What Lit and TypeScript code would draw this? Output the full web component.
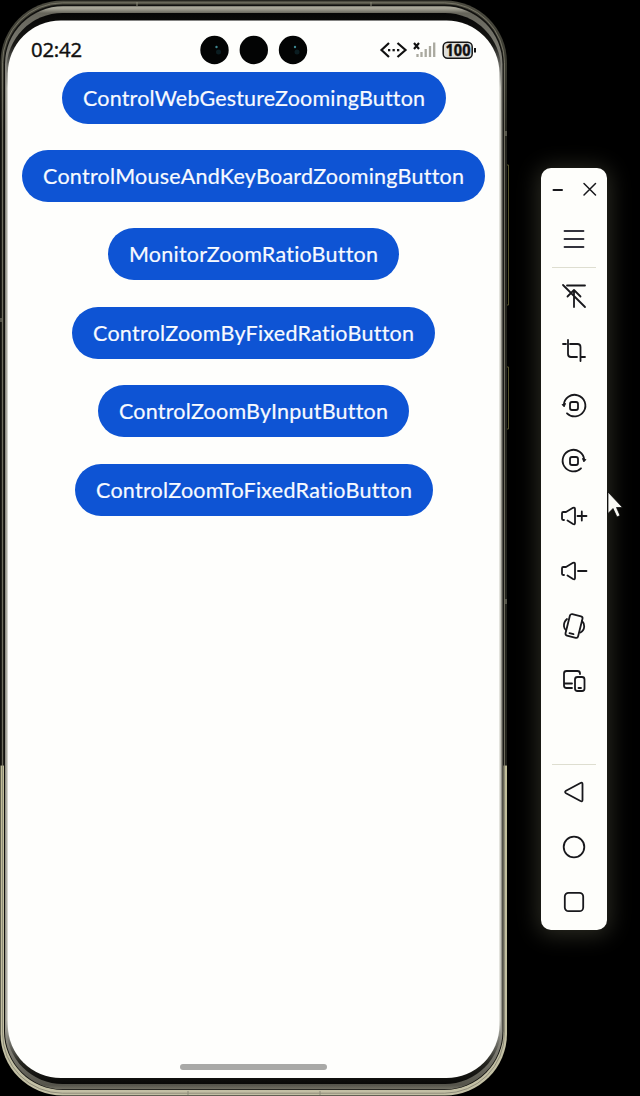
import { LitElement, html, css, svg } from "lit";
import { customElement } from "lit/decorators.js";

const actions = [
  { label: "ControlWebGestureZoomingButton", width: 384 },
  { label: "ControlMouseAndKeyBoardZoomingButton", width: 463 },
  { label: "MonitorZoomRatioButton", width: 291 },
  { label: "ControlZoomByFixedRatioButton", width: 363 },
  { label: "ControlZoomByInputButton", width: 311 },
  { label: "ControlZoomToFixedRatioButton", width: 358 },
];

const icon = (body: unknown) => html`<svg class="icon" width="28" height="28" viewBox="0 0 28 28">${body}</svg>`;

const menu = svg`<path d="M4.5 6H23.5M4.5 14H23.5M4.5 22H23.5" stroke="#33333c"/>`;
const unpin = svg`<path d="M7 3.5H25M14 25V8M7.5 14.5L14 8L20.5 14.5M3 3L25 25"/>`;
const crop = svg`<path d="M3 7H6M10 7H17.5Q20.5 7 20.5 10V24M8 3V17Q8 20 11 20H17M21 20H25"/>`;
const rotateLeft = svg`<path d="M3.8 13A10.8 10.8 0 1 1 7 21.3"/><path d="M2.5 12.5L5.5 11.5L4.3 14.5Z" fill="#18181c" stroke-width="1"/><rect x="10" y="10" width="8" height="8" rx="2"/>`;
const rotateRight = svg`<path d="M24.2 13A10.8 10.8 0 1 0 21 21.3"/><path d="M25.5 12.5L22.5 11.5L23.7 14.5Z" fill="#18181c" stroke-width="1"/><rect x="10" y="10" width="8" height="8" rx="2"/>`;
const speaker = svg`<path d="M4 18H3.2Q2 18 2 16.8V11.2Q2 10 3.2 10H6L13 5.8Q15 5 15 7V21Q15 23 13 22L7.5 18.5"/>`;
const louder = svg`${speaker}<path d="M17.5 14H26.5M21.8 9.5V18.5"/>`;
const quieter = svg`${speaker}<path d="M18 14H26.5"/>`;
const shake = svg`<rect x="7.5" y="3" width="13" height="22" rx="2" transform="rotate(14 14 14)"/><path d="M9.5 21.2L13.5 22.2M7 7Q3.5 10 4 14.5Q4.3 17 6 18M22 9Q24.5 11.5 24.2 14.5Q24 18.5 20.5 20.5"/>`;
const devices = svg`<path d="M20 7V6.5Q20 4 17.5 4H6.5Q4 4 4 6.5V18.5Q4 21 6.5 21H12M4 16.5H12"/><rect x="15" y="10" width="9.5" height="14" rx="2.5"/><path d="M18.5 21H21"/>`;
const back = svg`<path d="M22.5 6V22Q22.5 24 20.5 23L6 15.2Q4.2 14 6 12.8L20.5 5Q22.5 4 22.5 6Z"/>`;
const home = svg`<circle cx="14" cy="14" r="10.3"/>`;
const recent = svg`<rect x="4.8" y="4.8" width="18.4" height="18.4" rx="3.8"/>`;

@customElement("app-root")
export class AppRoot extends LitElement {
  static styles = css`
    :host { display: block; width: 640px; height: 1096px; overflow: hidden; background: #000; font-family: Lato, "Open Sans", sans-serif; }
    .desktop { display: flex; width: 640px; height: 1096px; align-items: flex-start; }
    .phone { display: grid; width: 510px; height: 1096px; flex: none; }
    .phone > * { grid-area: 1 / 1; }
    .screen { margin: 21px 0 0 8px; width: 491px; height: 1057px; display: flex; flex-direction: column; align-items: center; }
    .status { width: 491px; height: 50px; flex: none; }
    .status text { font-family: "Noto Sans", sans-serif; fill: #111; stroke: #111; stroke-width: .35px; }
    .list { display: flex; flex-direction: column; align-items: center; gap: 26.4px; flex: 1; padding-top: .6px; }
    .pill { display: block; height: 52px; padding: 0; border: 0; border-radius: 26px; background: #0e54d4; }
    .pill svg { display: block; width: 100%; height: 52px; }
    .pill text { fill: #f7faff; font-family: Lato, sans-serif; font-size: 21.5px; font-variant-ligatures: none; stroke: #f7faff; stroke-width: .2px; }
    .handle { width: 147px; height: 6px; border-radius: 3px; background: #a9a9a7; margin-bottom: 8px; }
    .tools { margin: 168px 0 0 31px; width: 66px; height: 762px; border-radius: 10px; background: #fefefb; box-shadow: 0 2px 22px 3px #2b2b22; display: flex; flex-direction: column; align-items: center; flex: none; }
    .window { height: 43px; width: 66px; flex: none; }
    .icon { display: block; flex: none; }
    .icon, .window { fill: none; stroke: #18181c; stroke-width: 1.8; stroke-linecap: round; stroke-linejoin: round; }
    .first { height: 56px; display: flex; align-items: center; }
    .group { width: 44px; border-top: 1px solid #deded0; display: flex; flex-direction: column; align-items: center; gap: 27px; padding-top: 14px; }
    .upper { height: 482px; }
    .lower { padding-top: 13px; }
    .cursor { position: absolute; left: 607px; top: 489px; }
  `;

  frame() {
    return html`<svg width="510" height="1096" viewBox="0 0 510 1096" fill="none">
      <defs>
        <linearGradient id="rim" x1="0" y1="0" x2="0" y2="1096" gradientUnits="userSpaceOnUse">
          <stop offset="0" stop-color="#4c4b40"/><stop offset=".06" stop-color="#38382f"/><stop offset=".12" stop-color="#22221c"/><stop offset=".698" stop-color="#22221c"/><stop offset=".699" stop-color="#c0bd98"/><stop offset="1" stop-color="#c3c0a5"/>
        </linearGradient>
        <linearGradient id="metal" x1="0" y1="0" x2="0" y2="1096" gradientUnits="userSpaceOnUse">
          <stop offset="0" stop-color="#c4c2b0"/><stop offset=".008" stop-color="#a3a194"/><stop offset=".012" stop-color="#66655b"/><stop offset=".06" stop-color="#85847c"/><stop offset=".94" stop-color="#96948a"/><stop offset=".99" stop-color="#55544b"/><stop offset="1" stop-color="#a4a290"/>
        </linearGradient>
        <linearGradient id="inner" x1="0" y1="13" x2="0" y2="1084" gradientUnits="userSpaceOnUse">
          <stop offset="0" stop-color="#050505"/><stop offset=".03" stop-color="#181815"/><stop offset=".07" stop-color="#c8c8bf"/><stop offset=".94" stop-color="#c8c8bf"/><stop offset=".98" stop-color="#25251f"/><stop offset="1" stop-color="#080807"/>
        </linearGradient>
      </defs>
      <path d="M507 165H508.5V305H507M507 367H508.5V429H507" stroke="#55532c"/>
      <rect x=".5" y=".5" width="506.5" height="1095" rx="62" fill="url(#rim)"/>
      <rect x="2.5" y="2.8" width="502" height="1090.4" rx="60" stroke="#817f70" stroke-width=".8"/>
      <rect x="4" y="4.5" width="499.5" height="1085.5" rx="59" fill="#10100e"/>
      <rect x="5" y="6.3" width="497.5" height="1083" rx="58" fill="url(#metal)"/>
      <rect x="6.5" y="13" width="494.5" height="1071" rx="56" fill="url(#inner)"/>
      <rect x="7.8" y="20.5" width="491.7" height="1057.5" rx="53" fill="#fefefc"/>
      <path d="M1 318V322M506 131V136M506 599V604M137 2V6M371 2V6M188 1091V1095M320 1091V1095" stroke="#8a8979"/>
    </svg>`;
  }

  status() {
    const lens = (x: number) => svg`<circle cx=${x} cy="29" r="14.2" fill="#030404"/>`;
    const glint = (x: number) => svg`<circle cx=${x + 2} cy="26" r="1.2" fill="#3c8791"/><circle cx=${x + 4} cy="31" r="2.5" fill="#0b1d21"/>`;
    return html`<svg class="status" viewBox="0 0 491 50">
      <text x="23" y="36" font-size="20.3" textLength="51">02:42</text>
      ${lens(206.5)}${lens(245.8)}${lens(285)}${glint(206.5)}${glint(285)}
      <g fill="none" stroke="#111" stroke-width="2.2" stroke-linejoin="miter"><path d="M381 22L373.5 29L381 36M389.5 22L397.5 29L389.5 36"/></g>
      <g fill="#111"><rect x="380" y="28" width="2.3" height="2.3"/><rect x="384.5" y="28" width="2.3" height="2.3"/><rect x="389" y="28" width="2.3" height="2.3"/></g>
      <path d="M406 22L411 28M411 22L406 28" stroke="#111" stroke-width="2.1"/>
      <path d="M409.5 33V36M413.5 31V36M417.7 28V36M422 25V36M426.2 21.5V36" stroke="#aaa99f" stroke-width="2.3"/>
      <rect x="435.2" y="21.3" width="29" height="16" rx="4.5" fill="#dededa" stroke="#151515" stroke-width="1.5"/>
      <path d="M467 27V31.5" stroke="#151515" stroke-width="2"/>
      <text x="437.5" y="34.8" font-size="15.5" font-weight="700" textLength="25" lengthAdjust="spacingAndGlyphs">100</text>
    </svg>`;
  }

  render() {
    return html`<div class="desktop">
      <main class="phone">
        ${this.frame()}
        <div class="screen">
          ${this.status()}
          <div class="list">${actions.map((a) => html`<button class="pill" style="width:${a.width}px">
            <svg><text x="21" y="33.5" textLength=${a.width - 42}>${a.label}</text></svg>
          </button>`)}</div>
          <div class="handle"></div>
        </div>
      </main>
      <aside class="tools">
        <svg class="window" viewBox="0 0 66 43"><path d="M12.5 22H21" stroke-width="2"/><path d="M43 15.5L54.5 27M54.5 15.5L43 27" stroke-width="1.5"/></svg>
        <div class="first">${icon(menu)}</div>
        <div class="group upper">${[unpin, crop, rotateLeft, rotateRight, louder, quieter, shake, devices].map(icon)}</div>
        <div class="group lower">${[back, home, recent].map(icon)}</div>
      </aside>
      <svg class="cursor" width="18" height="30" viewBox="0 0 18 30"><path d="M1 3V24.5L6 19.5L10 28L13 26.5L9.5 18.5H15.5Z" fill="#f8f8f3" stroke="#000" stroke-width=".7"/></svg>
    </div>`;
  }
}
